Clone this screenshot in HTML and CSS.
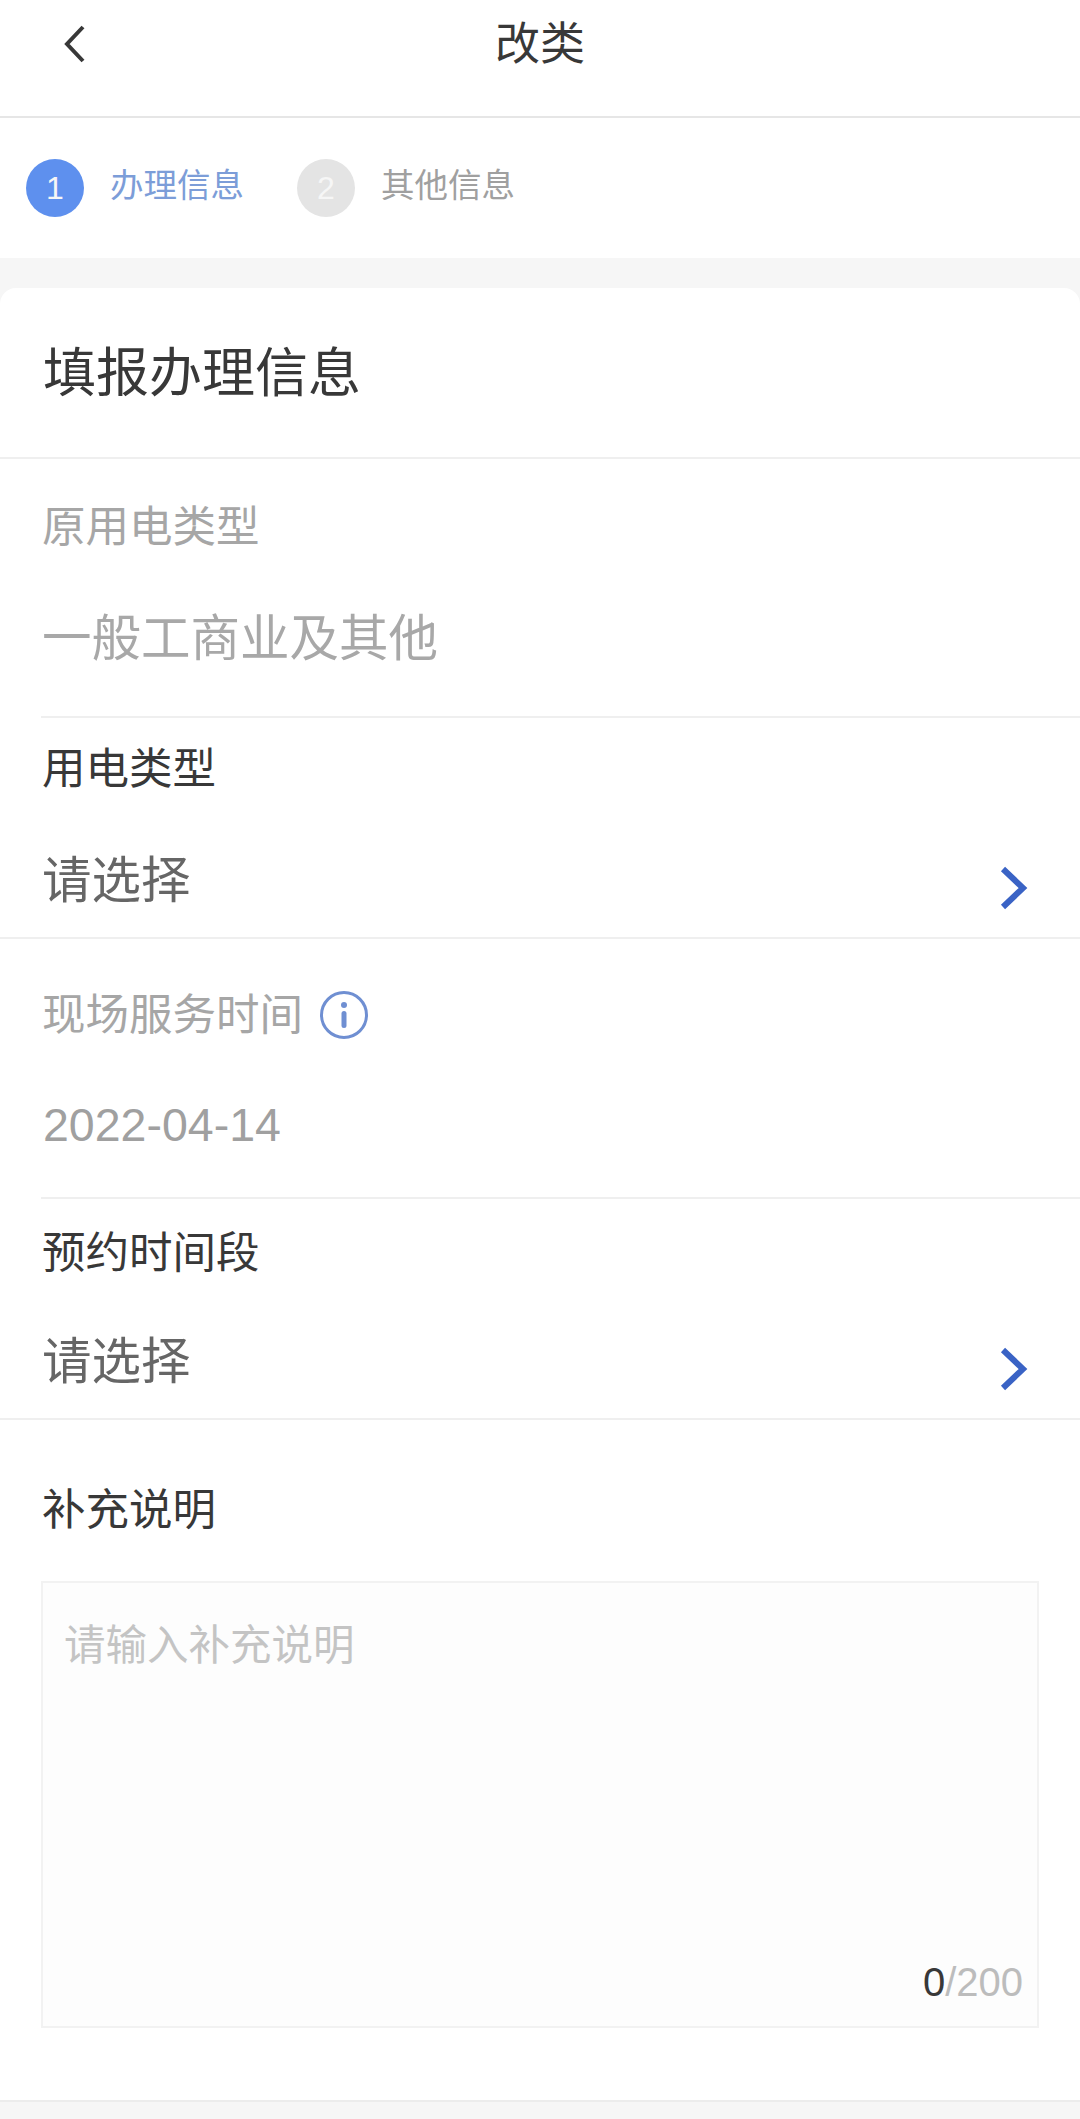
FILE: index.html
```html
<!DOCTYPE html>
<html lang="zh-CN">
<head>
<meta charset="utf-8">
<title>改类</title>
<link rel="stylesheet" href="styles.css">
</head>
<body>
<header class="nav">
  <svg class="nav-back" viewBox="0 0 24 38" aria-hidden="true"><path d="M21 2 L5 19 L21 36"/></svg>
  <h1 class="nav-title">改类</h1>
</header>
<section class="steps">
  <div class="step step-active"><span class="step-dot">1</span><span class="step-text">办理信息</span></div>
  <div class="step step-idle"><span class="step-dot">2</span><span class="step-text">其他信息</span></div>
</section>
<main class="card">
  <h2 class="card-title">填报办理信息</h2>
  <div class="field field-a">
    <div class="label muted">原用电类型</div>
    <div class="value muted">一般工商业及其他</div>
  </div>
  <div class="field field-b">
    <div class="label">用电类型</div>
    <div class="value-row"><span class="value">请选择</span>
      <svg class="chev" viewBox="0 0 30 44" aria-hidden="true"><path d="M4 3 L24 22 L4 41"/></svg>
    </div>
  </div>
  <div class="field field-c">
    <div class="label muted with-icon">现场服务时间
      <svg class="info" viewBox="0 0 48 48" aria-hidden="true">
        <circle class="info-ring" cx="24" cy="24" r="22.5"/>
        <circle class="info-fill" cx="24" cy="14" r="3"/>
        <rect class="info-fill" x="21.5" y="20" width="5" height="17" rx="2.5"/>
      </svg>
    </div>
    <div class="value muted date">2022-04-14</div>
  </div>
  <div class="field field-d">
    <div class="label">预约时间段</div>
    <div class="value-row"><span class="value">请选择</span>
      <svg class="chev" viewBox="0 0 30 44" aria-hidden="true"><path d="M4 3 L24 22 L4 41"/></svg>
    </div>
  </div>
  <div class="field field-e">
    <div class="label">补充说明</div>
    <div class="textbox">
      <div class="placeholder">请输入补充说明</div>
      <div class="counter"><span class="counter-now">0</span>/200</div>
    </div>
  </div>
</main>
<footer class="foot"></footer>
</body>
</html>
```
FILE: styles.css
```css
* { box-sizing: border-box; }
html, body { margin: 0; padding: 0; }
body {
  width: 1080px;
  height: 2119px;
  overflow: hidden;
  background: #f6f6f6;
  color: #383838;
  font-family: "Liberation Sans", "Noto Sans CJK SC", sans-serif;
}
.nav {
  height: 118px;
  background: #fff;
  border-bottom: 2px solid #e6e6e6;
  display: grid;
  grid-template-columns: 1fr auto 1fr;
  align-items: start;
  padding-left: 62px;
}
.nav-back {
  width: 24px;
  height: 38px;
  margin-top: 25px;
  fill: none;
  stroke: #383838;
  stroke-width: 4;
}
.nav-title {
  margin: 16px 0 0;
  font-size: 45px;
  line-height: 58px;
  font-weight: 400;
  transform: translateX(-31px);
}
.steps {
  height: 140px;
  background: #fff;
  display: flex;
  align-items: center;
  gap: 53px;
  padding: 0 0 0 26px;
}
.step { display: flex; align-items: center; gap: 26px; color: #a0a0a0; }
.step-active { color: #7c9dd8; }
.step-dot {
  width: 58px;
  height: 58px;
  border-radius: 50%;
  background: #e4e4e4;
  color: #f6f6f6;
  font-size: 32px;
  display: flex;
  align-items: center;
  justify-content: center;
}
.step-active .step-dot { background: #5e90ee; }
.step-text { font-size: 33.5px; line-height: 48px; margin-top: -4px; }
.card {
  margin-top: 30px;
  background: #fff;
  border-radius: 16px 16px 0 0;
}
.card-title {
  margin: 0;
  height: 171px;
  padding: 54px 0 0 43px;
  font-size: 53px;
  line-height: 64px;
  font-weight: 400;
  border-bottom: 2px solid #efefef;
}
.field { position: relative; padding-left: 42px; }
.field-a { padding-top: 38px; padding-bottom: 47px; }
.field-b { padding-top: 23px; padding-bottom: 26px; }
.field-c { padding-top: 46px; padding-bottom: 42px; border-top: 2px solid #efefef; }
.field-d { padding-top: 26px; padding-bottom: 26px; }
.field-e { padding-top: 60px; padding-bottom: 72px; border-top: 2px solid #efefef; }
.field-b::before,
.field-d::before {
  content: "";
  position: absolute;
  top: 0;
  left: 41px;
  right: 0;
  height: 2px;
  background: #efefef;
}
.label { font-size: 43.5px; line-height: 60px; color: #383838; }
.muted { color: #a6a6a6; }
.with-icon { display: flex; align-items: center; gap: 17px; }
.info { width: 48px; height: 48px; }
.info-ring { fill: none; stroke: #6f8fd2; stroke-width: 3; }
.info-fill { fill: #6f8fd2; }
.value { font-size: 49.5px; line-height: 60px; color: #666; }
.value.muted { color: #a8a8a8; }
.field-a .value { margin-top: 52px; }
.value.date { margin-top: 50px; font-size: 46.5px; padding-left: 1px; color: #a0a0a0; }
.value-row {
  display: flex;
  align-items: center;
  justify-content: space-between;
  padding-right: 51px;
  margin-top: 52px;
}
.field-d .value-row { margin-top: 49px; }
.chev {
  width: 30px;
  height: 44px;
  margin-top: 14px;
  fill: none;
  stroke: #3a63c5;
  stroke-width: 6;
}
.textbox {
  margin-top: 41px;
  margin-left: -1px;
  width: 998px;
  height: 447px;
  background: #fdfdfd;
  border: 2px solid #f2f2f2;
  display: flex;
  flex-direction: column;
  justify-content: space-between;
  padding: 38px 14px 19px 21px;
}
.placeholder { font-size: 41.5px; line-height: 50px; color: #c4c4c4; }
.counter { align-self: flex-end; font-size: 40px; line-height: 50px; color: #bcbcbc; }
.counter-now { color: #383838; }
.foot {
  height: 19px;
  background: #f6f6f6;
  border-top: 2px solid #ececec;
}
```
